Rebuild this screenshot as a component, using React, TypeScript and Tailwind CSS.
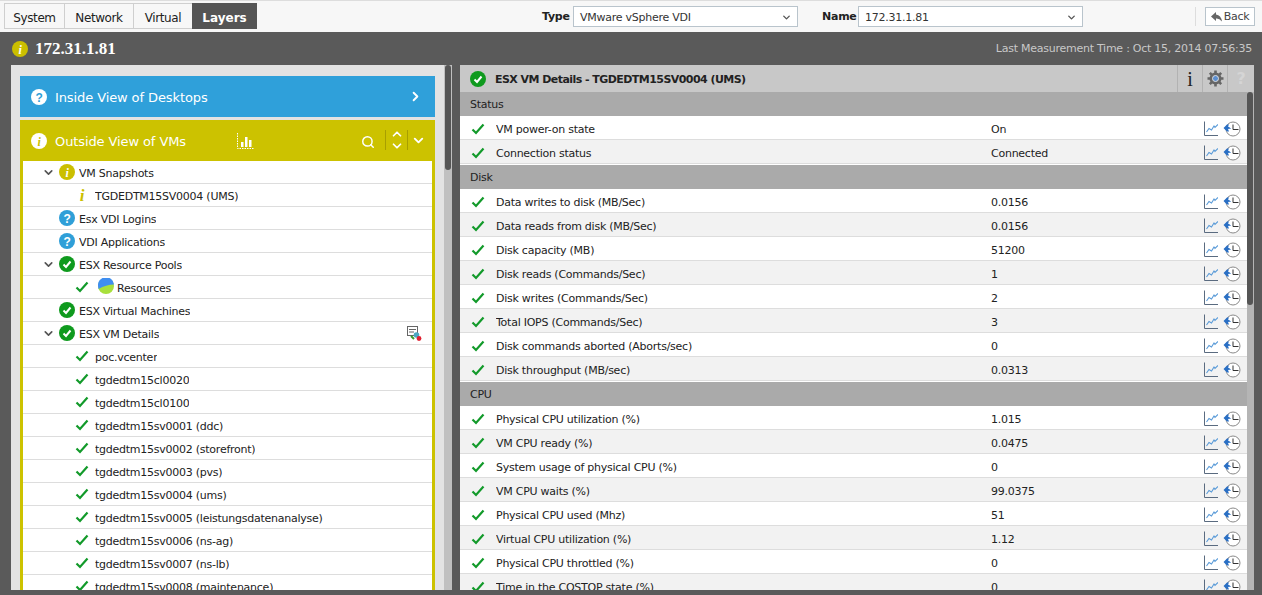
import React from "react";
import { ChevronDown, ChevronRight, ChevronUp, Search } from "lucide-react";

const FONT = "font-['Tahoma','DejaVu_Sans','Noto_Sans',sans-serif]";

function Tick({ className = "" }: { className?: string }) {
  return (
    <svg width="14" height="12" viewBox="0 0 14 12" className={className}>
      <path d="M1.5 6.5 L5 10 L12.5 1.5" fill="none" stroke="#129a2a" strokeWidth="2.2" />
    </svg>
  );
}
function Badge({ kind, size = 16 }: { kind: "ok" | "info" | "q"; size?: number }) {
  const color = kind === "ok" ? "#0f9a1e" : kind === "info" ? "#cbbf00" : "#2f9fd8";
  return (
    <svg width={size} height={size} viewBox="0 0 16 16" className="shrink-0">
      <circle cx="8" cy="8" r="8" fill={color} />
      {kind === "ok" && <path d="M4.5 8.5 L7 11 L11.5 5.5" fill="none" stroke="#fff" strokeWidth="2" />}
      {kind === "info" && <text x="8" y="12.5" textAnchor="middle" fontSize="12" fontWeight="700" fontStyle="italic" fontFamily="Liberation Serif, serif" fill="#fff">i</text>}
      {kind === "q" && <text x="8" y="12.5" textAnchor="middle" fontSize="12" fontWeight="700" fontFamily="Liberation Sans, sans-serif" fill="#fff">?</text>}
    </svg>
  );
}
function WhiteBadge({ glyph }: { glyph: string }) {
  return (
    <svg width="16" height="16" viewBox="0 0 16 16" className="shrink-0">
      <circle cx="8" cy="8" r="8" fill="#fff" />
      <text x="8" y="12.5" textAnchor="middle" fontSize="12" fontWeight="700" fontStyle={glyph === "i" ? "italic" : "normal"} fontFamily={glyph === "i" ? "Liberation Serif, serif" : "Liberation Sans, sans-serif"} fill={glyph === "i" ? "#cbbf00" : "#2f9fd8"}>{glyph}</text>
    </svg>
  );
}
function RowIcons() {
  return (
    <div className="flex items-center gap-[5px] shrink-0">
      <svg width="14" height="15" viewBox="0 0 14 15">
        <path d="M0.5 0.5 V14.5 H14" fill="none" stroke="#5a6b80" strokeWidth="1" />
        <path d="M2.5 11 L5 7.5 L7.5 9 L10 5 L11 6.5 L14 3.5" fill="none" stroke="#5a9bd8" strokeWidth="1.1" />
      </svg>
      <svg width="18" height="16" viewBox="0 0 18 16">
        <circle cx="10" cy="8" r="7" fill="#fff" stroke="#8a8a8a" strokeWidth="1" />
        <path d="M10 3.5 V8.5 H15.5" fill="none" stroke="#333" strokeWidth="1" />
        <path d="M0.5 7 L4 3.5 H6 L5 5.5 Q7 6 8 8 Q6 7.5 5 8 L6 10.5 H4 Z" fill="#2a6fc4" />
      </svg>
    </div>
  );
}
type R = [string, string];
function Section({ title, rows }: { title: string; rows: R[] }) {
  return (
    <div className="mb-[1px] shrink-0">
      <div className="h-[24px] bg-[#aaaaaa] pl-[10px] pt-[2px] flex items-center text-[#222]">{title}</div>
      {rows.map((r, i) => (
        <div key={r[0]} className={`h-[24px] flex items-center border-b border-[#dddddd] ${i % 2 ? "bg-[#f2f2f2]" : "bg-white"}`}>
          <div className="w-[36px] pl-[11px] pt-[2px] flex"><Tick /></div>
          <div className="w-[495px] truncate text-[#222] pt-[5px]">{r[0]}</div>
          <div className="flex-1 text-[#222] pt-[5px]">{r[1]}</div>
          <div className="pr-[6px] pt-[2px]"><RowIcons /></div>
        </div>
      ))}
    </div>
  );
}
function TreeRow({ level, arrow, icon, label, extra }: { level: number; arrow?: boolean; icon: React.ReactNode; label: string; extra?: React.ReactNode }) {
  return (
    <div className="h-[23px] shrink-0 flex items-center border-b border-[#dddddd] text-[#222] relative">
      <div className="w-[36px] shrink-0 flex justify-end pr-[4px]">
        {arrow && <ChevronDown size={13} strokeWidth={3} className="text-[#555]" />}
      </div>
      {level === 0 ? <div className="w-[20px] shrink-0 flex justify-start">{icon}</div> : <div className="w-[36px] shrink-0 flex justify-center pl-[14px] pr-[4px]">{icon}</div>}
      <span className="truncate pt-[4px]">{label}</span>
      {extra}
    </div>
  );
}
const leaves = [
  "poc.vcenter", "tgdedtm15cl0020", "tgdedtm15cl0100", "tgdedtm15sv0001 (ddc)", "tgdedtm15sv0002 (storefront)",
  "tgdedtm15sv0003 (pvs)", "tgdedtm15sv0004 (ums)", "tgdedtm15sv0005 (leistungsdatenanalyse)", "tgdedtm15sv0006 (ns-ag)",
  "tgdedtm15sv0007 (ns-lb)", "tgdedtm15sv0008 (maintenance)",
];
const status: R[] = [["VM power-on state", "On"], ["Connection status", "Connected"]];
const disk: R[] = [
  ["Data writes to disk (MB/Sec)", "0.0156"], ["Data reads from disk (MB/Sec)", "0.0156"], ["Disk capacity (MB)", "51200"],
  ["Disk reads (Commands/Sec)", "1"], ["Disk writes (Commands/Sec)", "2"], ["Total IOPS (Commands/Sec)", "3"],
  ["Disk commands aborted (Aborts/sec)", "0"], ["Disk throughput (MB/sec)", "0.0313"],
];
const cpu: R[] = [
  ["Physical CPU utilization (%)", "1.015"], ["VM CPU ready (%)", "0.0475"], ["System usage of physical CPU (%)", "0"],
  ["VM CPU waits (%)", "99.0375"], ["Physical CPU used (Mhz)", "51"], ["Virtual CPU utilization (%)", "1.12"],
  ["Physical CPU throttled (%)", "0"], ["Time in the COSTOP state (%)", "0"],
];
function Select({ value }: { value: string }) {
  return (
    <div className="w-[225px] h-[21px] border border-[#b9c4cc] bg-white flex items-center justify-between pl-[6px] pr-[5px] text-[#333]">
      <span className="pt-[3px]">{value}</span>
      <ChevronDown size={11} strokeWidth={3} className="text-[#555] mt-[2px]" />
    </div>
  );
}

export default function App() {
  return (
    <div className={`${FONT} w-[1262px] h-[595px] overflow-hidden bg-[#5a5a5a] flex flex-col text-[11px] tracking-[-0.25px]`}>
      <div className="h-[32px] shrink-0 bg-[#f7f7f7] border-t border-[#dddddd] flex items-start pl-[4px]">
        <div className="flex mt-[2px] h-[26px] text-[12px] tracking-[-0.4px]">
          <div className="w-[61px] border border-[#cfcfcf] flex items-center justify-center text-[#222] pt-[3px]">System</div>
          <div className="w-[69px] border border-l-0 border-[#cfcfcf] flex items-center justify-center text-[#222] pt-[3px]">Network</div>
          <div className="w-[58px] border-y border-[#cfcfcf] flex items-center justify-center text-[#222] pt-[3px]">Virtual</div>
          <div className="w-[65px] bg-[#555555] flex items-center justify-center text-white font-bold tracking-normal pt-[3px]">Layers</div>
        </div>
        <div className="flex items-center mt-[5px] ml-[285px]">
          <span className="font-bold text-[#222] w-[31px] pt-[2px]">Type</span>
          <Select value="VMware vSphere VDI" />
          <span className="font-bold text-[#222] ml-[24px] w-[36px] pt-[2px]">Name</span>
          <Select value="172.31.1.81" />
        </div>
        <div className="flex items-center mt-[6px] ml-[112px] pl-[9px] border-l border-[#dddddd] h-[19px]">
          <div className="w-[50px] h-[19px] border border-[#b9c4cc] bg-white flex items-center justify-center gap-[2px] text-[#444]">
            <svg width="11" height="10" viewBox="0 0 11 10">
              <path d="M0 4.5 L5 0 V2.5 Q10 3 11 9.5 Q8 6 5 6.5 V9 Z" fill="#666" />
            </svg>
            <span className="pt-[1px]">Back</span>
          </div>
        </div>
      </div>
      <div className="h-[33px] shrink-0 flex items-center pl-[12px] pr-[10px] justify-between">
        <div className="flex items-center gap-[7px]">
          <Badge kind="info" />
          <span className="font-['Liberation_Serif',serif] font-bold text-[17px] tracking-normal text-white">172.31.1.81</span>
        </div>
        <span className="text-[#c8c8c8] pt-[1px]">Last Measurement Time : Oct 15, 2014 07:56:35</span>
      </div>
      <div className="flex-1 min-h-0 flex pl-[11px] pb-[5px]">
        <div className="w-[433px] h-full bg-[#e3e3e3] pt-[11px] pl-[9px] pr-[9px] overflow-hidden shrink-0">
          <div className="h-[41px] bg-[#2fa0da] flex items-center pl-[11px] pr-[12px] text-white text-[13px] tracking-[-0.1px]">
            <WhiteBadge glyph="?" />
            <span className="ml-[8px] flex-1 pt-[2px]">Inside View of Desktops</span>
            <ChevronRight size={15} strokeWidth={3} />
          </div>
          <div className="mt-[3px] border-x-[3px] border-[#ccc200] bg-white">
            <div className="h-[41px] -mx-[3px] bg-[#ccc200] flex items-center pl-[11px] text-white text-[13px] tracking-[-0.1px] relative">
              <WhiteBadge glyph="i" />
              <span className="ml-[8px] w-[182px] pt-[2px]">Outside View of VMs</span>
              <svg width="17" height="16" viewBox="0 0 17 16">
                <path d="M0.5 0 V15.5 H17" fill="none" stroke="#fff" strokeDasharray="1.5 1" />
                <rect x="4" y="9" width="2.5" height="5" fill="#fff" />
                <rect x="8" y="4" width="2.5" height="10" fill="#fff" />
                <rect x="12" y="7" width="2.5" height="7" fill="#fff" />
              </svg>
              <div className="absolute right-[9px] top-[10px] flex items-center h-[20px]">
                <Search size={14} strokeWidth={2.5} className="mr-[10px] mt-[4px]" />
                <div className="w-px h-[20px] bg-[#a89f00]" />
                <div className="w-[21px] flex flex-col items-center">
                  <ChevronUp size={14} strokeWidth={3} className="-mb-[2px]" />
                  <ChevronDown size={14} strokeWidth={3} />
                </div>
                <div className="w-px h-[20px] bg-[#a89f00]" />
                <ChevronDown size={15} strokeWidth={3} className="ml-[3px]" />
              </div>
            </div>
            <TreeRow level={0} arrow icon={<Badge kind="info" />} label="VM Snapshots" />
            <TreeRow level={1} icon={<span className="font-['Liberation_Serif',serif] italic font-bold text-[17px] leading-none text-[#cbbf00]">i</span>} label="TGDEDTM15SV0004 (UMS)" />
            <TreeRow level={0} icon={<Badge kind="q" />} label="Esx VDI Logins" />
            <TreeRow level={0} icon={<Badge kind="q" />} label="VDI Applications" />
            <TreeRow level={0} arrow icon={<Badge kind="ok" />} label="ESX Resource Pools" />
            <div className="h-[23px] shrink-0 flex items-center border-b border-[#dddddd] text-[#222]">
              <div className="w-[66px] shrink-0 flex justify-end"><Tick /></div>
              <svg width="16" height="16" viewBox="0 0 16 16" className="ml-[9px] mr-[3px] -mt-[3px]">
                <circle cx="8" cy="8" r="8" fill="#a8e03c" />
                <path d="M0 8 A8 8 0 0 1 16 6.5 Q8 6.5 0.5 11 Z" fill="#3f8ef0" />
              </svg>
              <span className="pt-[4px]">Resources</span>
            </div>
            <TreeRow level={0} icon={<Badge kind="ok" />} label="ESX Virtual Machines" />
            <TreeRow
              level={0}
              arrow
              icon={<Badge kind="ok" />}
              label="ESX VM Details"
              extra={
                <svg width="15" height="15" viewBox="0 0 15 15" className="absolute right-[10px] top-[4px]">
                  <rect x="0.5" y="0.5" width="10" height="9" fill="#fff" stroke="#666" />
                  <path d="M2 3.5H9M2 6H7" stroke="#666" />
                  <path d="M4 10 L7 13" stroke="#3a9a2a" strokeWidth="2" />
                  <circle cx="9.5" cy="9" r="2.8" fill="#4aa8c0" />
                  <circle cx="12" cy="12.5" r="2.4" fill="#e02030" />
                </svg>
              }
            />
            {leaves.map((l) => (
              <div key={l} className="h-[23px] shrink-0 flex items-center border-b border-[#dddddd] text-[#222]">
                <div className="w-[66px] shrink-0 flex justify-end"><Tick /></div>
                <span className="ml-[6px] truncate pt-[4px]">{l}</span>
              </div>
            ))}
          </div>
        </div>
        <div className="w-[16px] h-full shrink-0 flex">
          <div className="w-[8px] bg-[#c0c0c0] h-full relative">
            <div className="absolute left-[1px] top-0 w-[6px] h-[105px] bg-[#555] rounded-[3px]" />
          </div>
        </div>
        <div className="w-[794px] h-full shrink-0 bg-white flex flex-col overflow-hidden">
          <div className="h-[27px] shrink-0 bg-[#c8c8c8] flex items-center pl-[10px]">
            <Badge kind="ok" />
            <span className="ml-[9px] font-bold text-[#222] flex-1 tracking-[-0.55px] pt-[3px]">ESX VM Details - TGDEDTM15SV0004 (UMS)</span>
            <div className="w-[25px] h-full border-l border-[#b2b2b2] flex items-center justify-center font-['Liberation_Serif',serif] text-[20px] text-[#222]">i</div>
            <div className="w-[25px] h-full border-l border-[#b2b2b2] flex items-center justify-center">
              <svg width="17" height="17" viewBox="0 0 17 17">
                <circle cx="8.5" cy="8.5" r="6" fill="#666" />
                <path d="M8.5 0.5V16.5M0.5 8.5H16.5M2.8 2.8L14.2 14.2M14.2 2.8L2.8 14.2" stroke="#666" strokeWidth="2.6" />
                <circle cx="8.5" cy="8.5" r="3" fill="#5c8fd0" stroke="#ddd" />
              </svg>
            </div>
            <div className="w-[27px] h-full border-l border-[#b2b2b2] flex items-center justify-center font-bold text-[16px] text-[#d5d5d5]">?</div>
          </div>
          <div className="flex-1 min-h-0 flex overflow-hidden">
            <div className="flex-1 min-w-0 flex flex-col overflow-hidden">
              <Section title="Status" rows={status} />
              <Section title="Disk" rows={disk} />
              <Section title="CPU" rows={cpu} />
            </div>
            <div className="w-[7px] bg-[#b5b5b5] relative shrink-0">
              <div className="absolute left-0 top-0 w-[6px] h-[213px] bg-[#555] rounded-[3px]" />
            </div>
          </div>
        </div>
      </div>
    </div>
  );
}
